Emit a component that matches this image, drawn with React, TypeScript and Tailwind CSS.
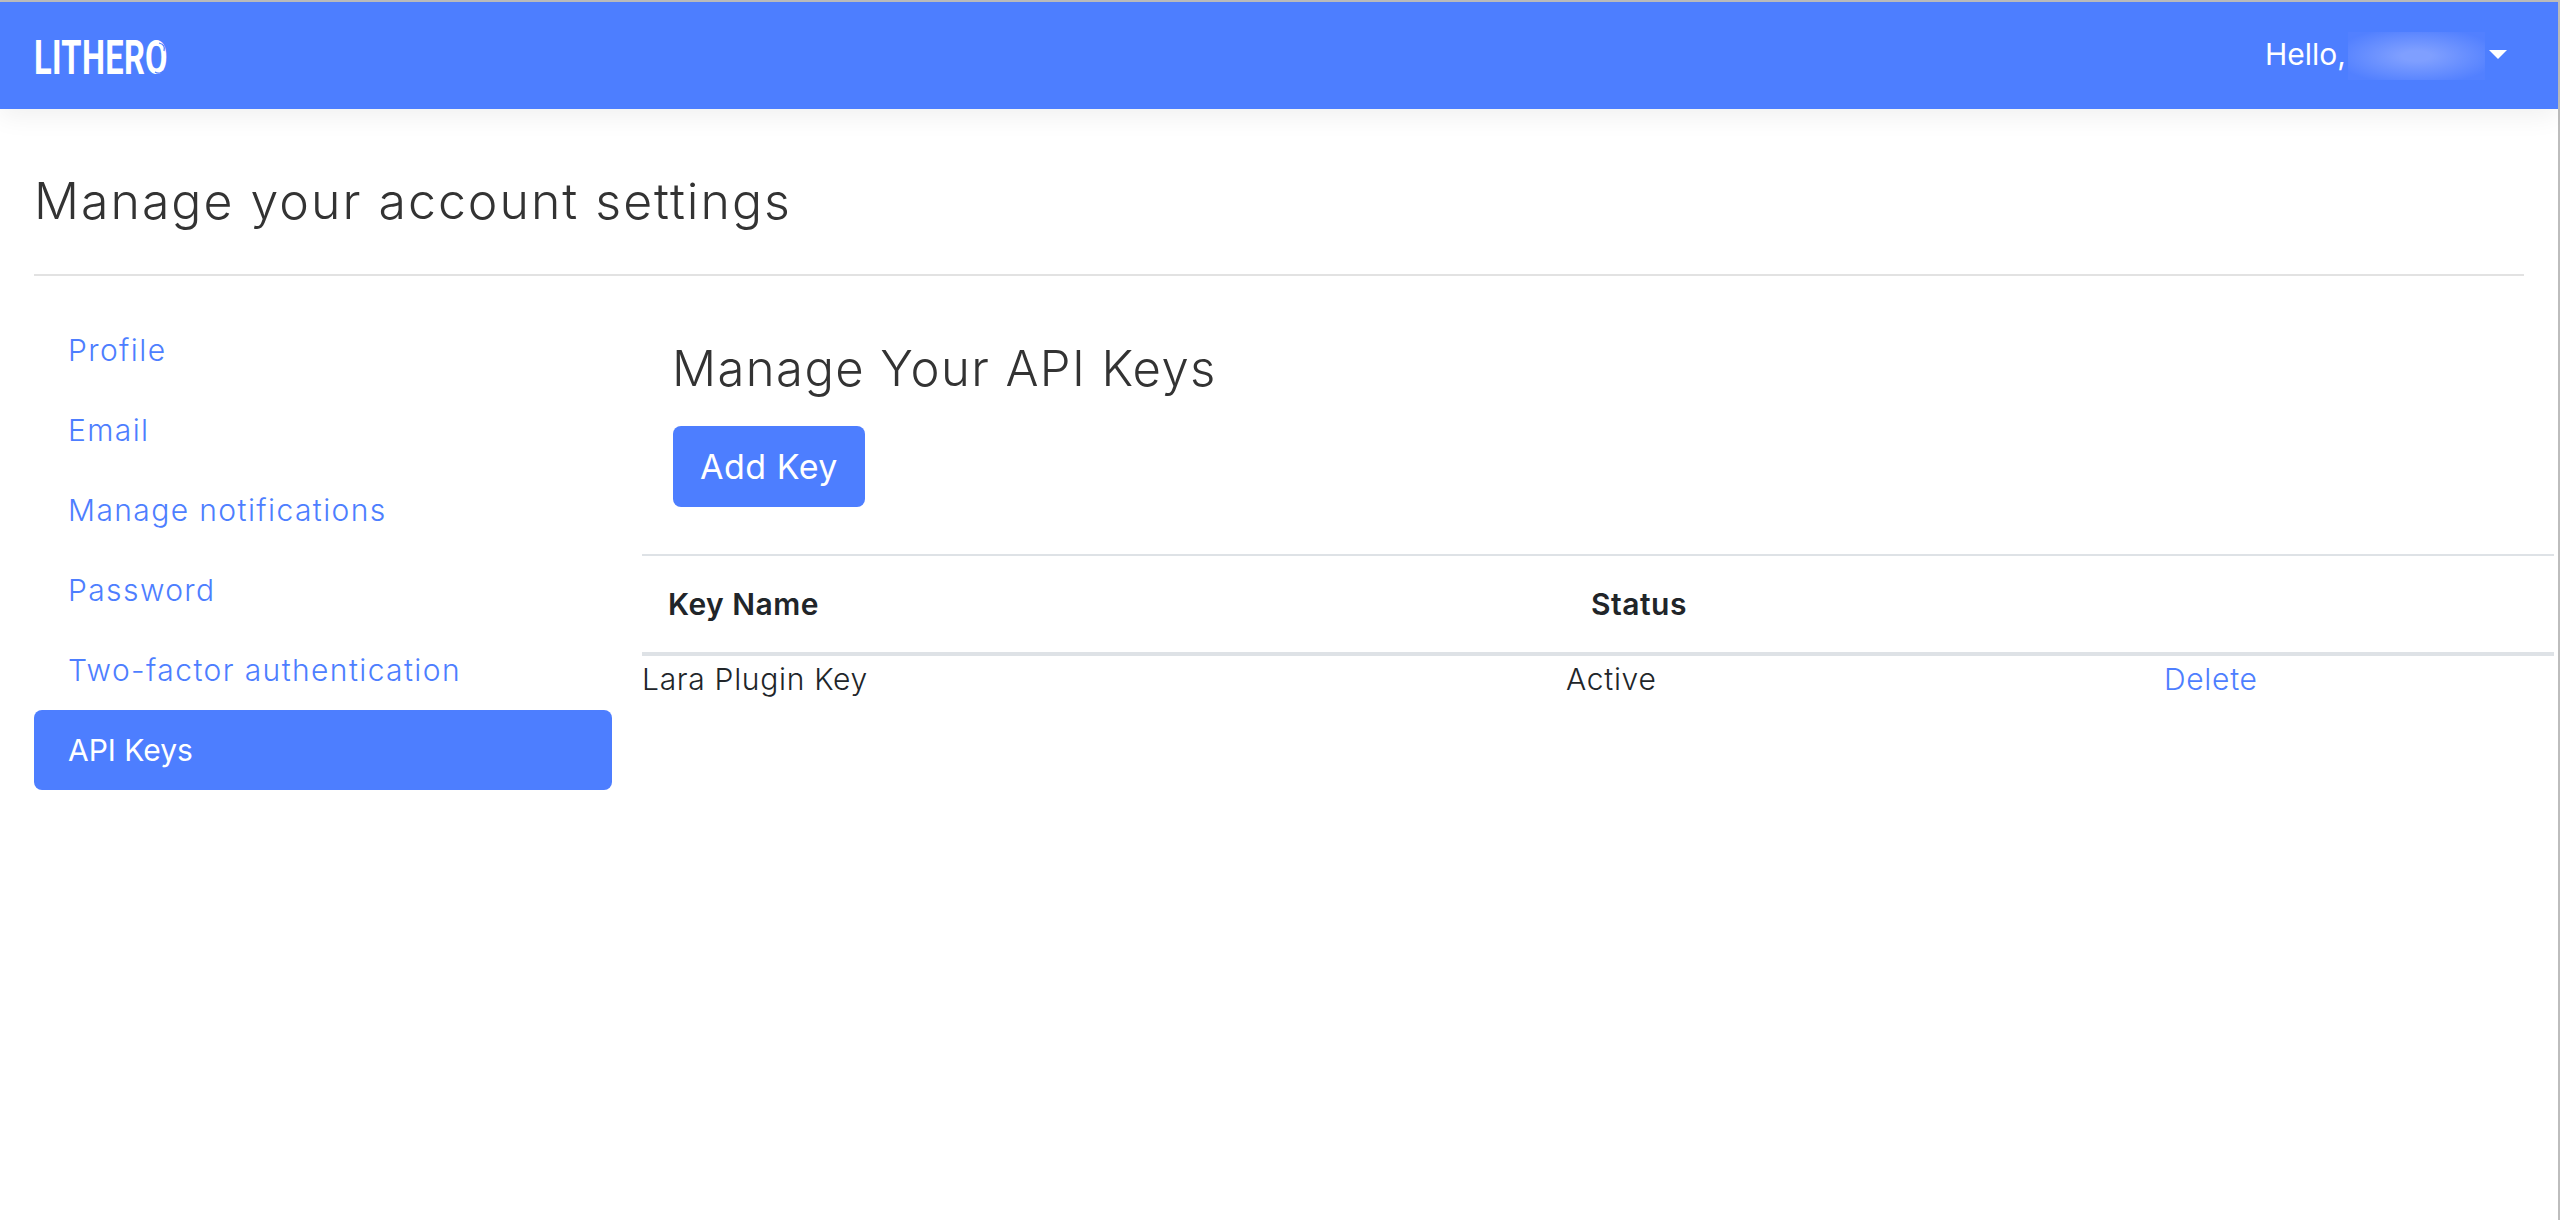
import React from 'react';

const sideItems = ['Profile', 'Email', 'Manage notifications', 'Password', 'Two-factor authentication', 'API Keys'];

function Logo() {
  return (
    <div className="relative mt-[3px] h-[35px] w-[134px]">
      <span className="block origin-top-left scale-x-[0.665] font-['Roboto',sans-serif] text-[49px] leading-[35px] font-bold tracking-[0.5px] whitespace-nowrap text-white">
        LITHERO
      </span>
      <svg className="absolute top-0 left-[116px] h-[35px] w-[18px]" viewBox="0 0 18 35" fill="none">
        <path d="M9 3c5 1 6 4 5 8" stroke="#4d7eff" strokeWidth="1.2" />
        <path d="M5 32c3 2 7 1 8-1" stroke="#4d7eff" strokeWidth="1.2" />
      </svg>
    </div>
  );
}

export default function App() {
  return (
    <div className="min-h-[1220px] border-t-2 border-r-2 border-[#bdbdbd] bg-white font-['Inter',sans-serif] text-[#212529]">
      <header className="flex h-[107px] items-center justify-between bg-[#4d7eff] pr-[51px] pl-[34px] shadow-[0_8px_24px_rgba(0,0,0,0.06)]">
        <Logo />
        <div className="flex items-center text-[30px] font-normal text-white">
          <span className="mr-[2px] -translate-y-[1px]">Hello,</span>
          <span className="h-[48px] w-[137px] bg-[radial-gradient(ellipse_at_center,#7f9fff_15%,#5280ff_85%)]" />
          <span className="ml-[4px] h-0 w-0 -translate-y-[1px] border-x-[9px] border-t-[9px] border-x-transparent border-t-white" />
        </div>
      </header>

      <main className="pt-[63px]">
        <div className="mr-[34px] ml-[34px] border-b-2 border-[#e2e2e2] pb-[44px]">
          <h1 className="text-[50px] leading-[58px] font-light tracking-[2px] text-[#333333]">Manage your account settings</h1>
        </div>

        <div className="flex pt-[34px]">
          <nav className="ml-[34px] flex w-[578px] shrink-0 flex-col">
            {sideItems.map((item) => (
              <a
                key={item}
                href="#"
                className={`flex h-[80px] items-center rounded-lg px-[34px] text-[30px] ${
                  item === 'API Keys' ? 'bg-[#4d7eff] font-normal text-white' : 'font-light tracking-[1.4px] text-[#4d7eff]'
                }`}
              >
                {item}
              </a>
            ))}
          </nav>

          <section className="mr-[4px] ml-[30px] flex-1 pt-[30px]">
            <div className="pl-[31px]">
              <h2 className="-ml-[1px] text-[49px] leading-[58px] font-light tracking-[1.4px] text-[#333333]">Manage Your API Keys</h2>
              <button
                type="button"
                className="mt-[28px] flex h-[81px] w-[192px] items-center justify-center rounded-lg bg-[#4d7eff] text-[34px] font-normal tracking-[0.5px] text-white"
              >
                Add Key
              </button>
            </div>

            <div className="mt-[47px] grid grid-cols-[924px_598px_1fr] border-t-2 border-[#dee2e6] text-[30px]">
              <div className="flex h-[100px] items-center border-b-4 border-[#dee2e6] pl-[26px] font-semibold tracking-[0.5px]">Key Name</div>
              <div className="flex h-[100px] items-center border-b-4 border-[#dee2e6] pl-[25px] font-semibold tracking-[0.5px]">Status</div>
              <div className="h-[100px] border-b-4 border-[#dee2e6]" />
              <div className="pt-[3px] leading-[40px] font-light tracking-[0.7px]">Lara Plugin Key</div>
              <div className="pt-[3px] leading-[40px] font-light tracking-[0.7px]">Active</div>
              <a href="#" className="pt-[3px] leading-[40px] font-light tracking-[0.7px] text-[#4d7eff]">Delete</a>
            </div>
          </section>
        </div>
      </main>
    </div>
  );
}
